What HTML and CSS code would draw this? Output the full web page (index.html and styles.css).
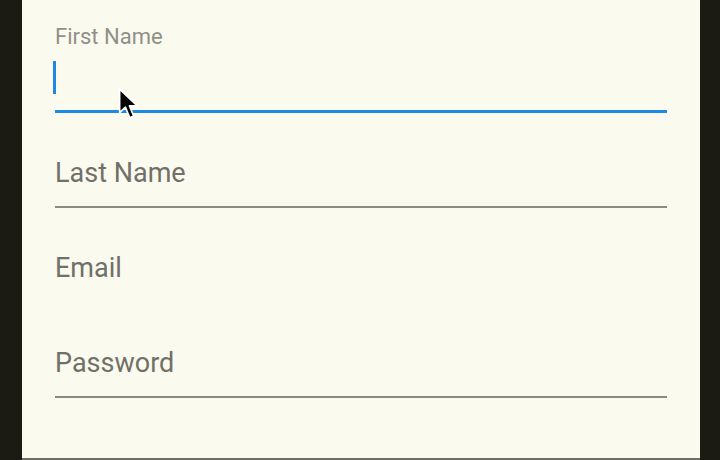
FILE: index.html
```html
<!DOCTYPE html>
<html>
<head>
<meta charset="utf-8">
<link rel="stylesheet" href="styles.css">
</head>
<body>
<div class="frame">
  <div class="side side-left"></div>
  <main class="form">
    <div class="field field-focused">
      <div class="float-label">First Name</div>
      <div class="caret"></div>
    </div>
    <div class="field">
      <div class="placeholder">Last Name</div>
    </div>
    <div class="field field-noline">
      <div class="placeholder">Email</div>
    </div>
    <div class="field">
      <div class="placeholder">Password</div>
    </div>
  </main>
  <div class="side side-right"></div>
  <svg class="pointer" width="22" height="36" viewBox="0 0 20 32">
    <path d="M1.5 1.5 L1.5 23 L6.8 18 L10.6 27.5 L14.2 26 L10.4 16.8 L17.5 16.8 Z" fill="#000" stroke="#fff" stroke-width="1.5" stroke-linejoin="round"/>
  </svg>
</div>
</body>
</html>
```

FILE: styles.css
```css
html, body {
  margin: 0;
  padding: 0;
  background: #1a1a12;
}
body {
  width: 720px;
  height: 460px;
  overflow: hidden;
  font-family: Roboto, "Noto Sans", sans-serif;
}
.frame {
  position: relative;
  display: flex;
  width: 720px;
  height: 460px;
}
.side {
  background: #1b1b13;
}
.side-left {
  width: 22px;
}
.side-right {
  width: 20px;
}
.form {
  width: 678px;
  box-sizing: border-box;
  height: 460px;
  padding: 18px 33px 0 33px;
  background: #fbfaee;
  border-bottom: 2px solid #6e6e66;
  display: flex;
  flex-direction: column;
}
.field {
  box-sizing: border-box;
  height: 95px;
  border-bottom: 2px solid #8a8a80;
  padding-top: 44px;
}
.field-noline {
  border-bottom-color: transparent;
}
.field-focused {
  border-bottom: 3px solid #1e88e5;
  padding-top: 7px;
}
.float-label {
  font-size: 22px;
  line-height: 24px;
  color: #909089;
  height: 24px;
}
.caret {
  margin-top: 12px;
  margin-left: -2px;
  width: 3px;
  height: 33px;
  background: #1e88e5;
}
.placeholder {
  font-size: 27px;
  line-height: 32px;
  color: #707069;
}
.pointer {
  position: absolute;
  left: 118px;
  top: 87px;
}
```
